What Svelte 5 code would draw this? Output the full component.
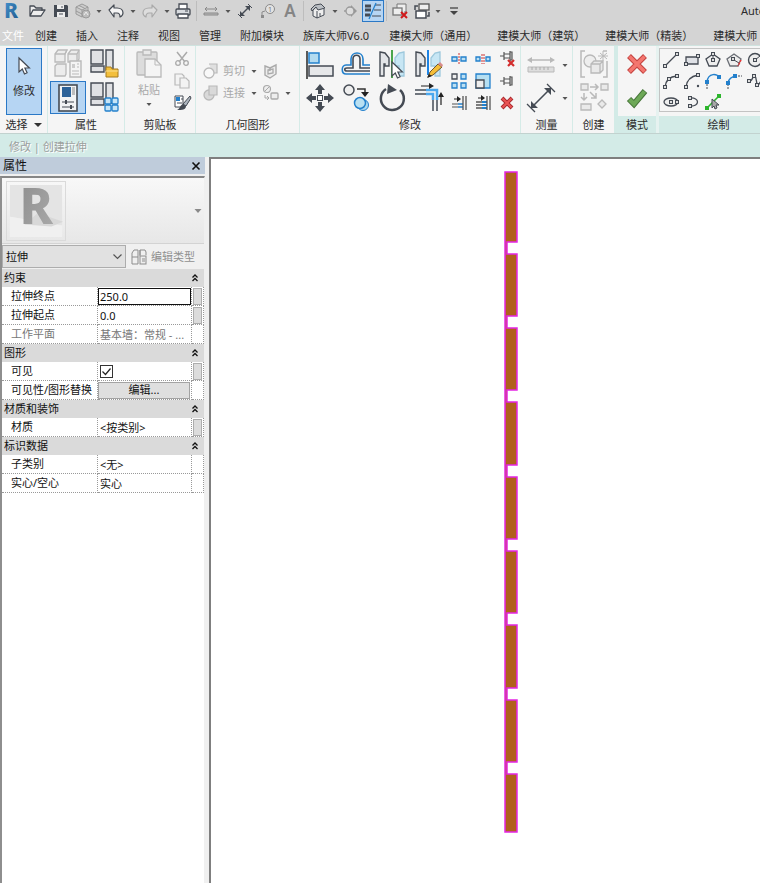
<script lang="ts">
  type Tool = { icon: string; label: string; w?: number; on?: boolean };
  type Prop = {
    id: string;
    name: string;
    value: string;
    kind: 'text' | 'select' | 'check' | 'button';
    muted?: boolean;
    focus?: boolean;
    link?: boolean;
  };
  type Group = { title: string; props: Prop[] };

  const quick: Tool[] = [
    { icon: 'open', label: '打开', w: 26 },
    { icon: 'save', label: '保存', w: 22 },
    { icon: 'sync', label: '同步', w: 22 },
    { icon: 'caret', label: '同步选项', w: 10 },
    { icon: 'undo', label: '放弃', w: 24 },
    { icon: 'caret', label: '放弃列表', w: 10 },
    { icon: 'redo', label: '重做', w: 24 },
    { icon: 'caret', label: '重做列表', w: 10 },
    { icon: 'print', label: '打印', w: 22 },
    { icon: 'sep', label: '' },
    { icon: 'measure', label: '测量', w: 24 },
    { icon: 'caret', label: '测量选项', w: 10 },
    { icon: 'dim', label: '对齐尺寸标注', w: 24 },
    { icon: 'tag', label: '按类别标记', w: 22 },
    { icon: 'text', label: '文字', w: 22 },
    { icon: 'sep', label: '' },
    { icon: 'house', label: '默认三维视图', w: 24 },
    { icon: 'caret', label: '视图选项', w: 10 },
    { icon: 'section', label: '剖面', w: 22 },
    { icon: 'thin', label: '细线', w: 22, on: true },
    { icon: 'sep', label: '' },
    { icon: 'closeWin', label: '关闭隐藏窗口', w: 22 },
    { icon: 'switchWin', label: '切换窗口', w: 22 },
    { icon: 'caret', label: '窗口列表', w: 10 },
    { icon: 'custom', label: '自定义', w: 22 }
  ];

  const tabs = [
    '文件', '创建', '插入', '注释', '视图', '管理', '附加模块', '族库大师V6.0',
    '建模大师（通用）', '建模大师（建筑）', '建模大师（精装）', '建模大师（机电）'
  ];

  const propTools: Tool[] = [
    { icon: 'typeProps', label: '类型属性' },
    { icon: 'family', label: '族类别' },
    { icon: 'palette', label: '属性', on: true },
    { icon: 'familyTypes', label: '族类型' }
  ];
  const clipTools: Tool[] = [
    { icon: 'cut', label: '剪切' },
    { icon: 'copyPage', label: '复制到剪贴板' },
    { icon: 'brush', label: '匹配类型' }
  ];
  const modifyTools: Tool[] = [
    { icon: 'align', label: '对齐' },
    { icon: 'offset', label: '偏移' },
    { icon: 'mirrorPick', label: '镜像 - 拾取轴' },
    { icon: 'mirrorDraw', label: '镜像 - 绘制轴' },
    { icon: 'move', label: '移动' },
    { icon: 'copy', label: '复制' },
    { icon: 'rotate', label: '旋转' },
    { icon: 'trimCorner', label: '修剪/延伸为角' }
  ];
  const modifySmall: Tool[] = [
    { icon: 'split', label: '拆分图元' },
    { icon: 'splitGap', label: '用间隙拆分' },
    { icon: 'unpin', label: '解锁' },
    { icon: 'array', label: '阵列' },
    { icon: 'scale', label: '缩放' },
    { icon: 'pin', label: '锁定' },
    { icon: 'trimOne', label: '修剪/延伸单个图元' },
    { icon: 'trimMany', label: '修剪/延伸多个图元' },
    { icon: 'delete', label: '删除' }
  ];
  const drawTools: Tool[] = [
    { icon: 'line', label: '线' },
    { icon: 'rect', label: '矩形' },
    { icon: 'polyIn', label: '内接多边形' },
    { icon: 'polyOut', label: '外接多边形' },
    { icon: 'circle', label: '圆形' },
    { icon: 'arc3', label: '起点-终点-半径弧' },
    { icon: 'arcCenter', label: '圆心-端点弧' },
    { icon: 'arcTangent', label: '相切-端点弧' },
    { icon: 'fillet', label: '圆角弧' },
    { icon: 'spline', label: '样条曲线' },
    { icon: 'ellipse', label: '椭圆' },
    { icon: 'halfEllipse', label: '半椭圆' },
    { icon: 'pick', label: '拾取线' }
  ];

  const groups: Group[] = [
    {
      title: '约束',
      props: [
        { id: 'end', name: '拉伸终点', value: '250.0', kind: 'text', focus: true, link: true },
        { id: 'start', name: '拉伸起点', value: '0.0', kind: 'text', link: true },
        { id: 'plane', name: '工作平面', value: '基本墙：常规 - ...', kind: 'text', muted: true }
      ]
    },
    {
      title: '图形',
      props: [
        { id: 'visible', name: '可见', value: '', kind: 'check', link: true },
        { id: 'override', name: '可见性/图形替换', value: '编辑...', kind: 'button' }
      ]
    },
    {
      title: '材质和装饰',
      props: [{ id: 'material', name: '材质', value: '<按类别>', kind: 'text', link: true }]
    },
    {
      title: '标识数据',
      props: [
        { id: 'subcat', name: '子类别', value: '<无>', kind: 'select' },
        { id: 'solid', name: '实心/空心', value: '实心', kind: 'select' }
      ]
    }
  ];

  // every drawing is centred on 0,0
  const D = '#454b54';
  const G = '#b9b9b9';
  const B = '#2380cc';
  const cursor = (x: number, y: number) =>
    `<path transform="translate(${x} ${y})" d="M0 0v14l3.3-3 2.2 5 2.6-1.2-2.2-4.8h4.5z" fill="#fff" stroke="${D}" stroke-width="1.2"/>`;
  const dot = (x: number, y: number, c = D) =>
    `<rect x="${x - 1.5}" y="${y - 1.5}" width="3" height="3" fill="${c === D ? '#ddd' : c}" stroke="${c}"/>`;
  const tiles =
    `<g fill="#e0e1e4" stroke="${D}" stroke-width="1.4"><path d="M-13-15h12v14h-12zM2-15h7V5H2zM-13 1h13v6h-13z"/></g>`;

  const icons: Record<string, string> = {
    caret: `<path d="M-2.5-1h5L0 2z" fill="#555"/>`,
    typeCaret: `<path d="M-3.5-2h7L0 2z" fill="#8a8a8a"/>`,
    custom: `<path d="M-4-3h8" stroke="#444" stroke-width="1.3"/><path d="M-4 0h8L0 4z" fill="#444"/>`,
    open: `<path d="M-7 5V-5h4l2 2h6v3M-7 5l3-6H8L4 5z" fill="#eee" stroke="${D}" stroke-width="1.3" stroke-linejoin="round"/>`,
    save: `<path d="M-7-6H6l1 1V6H-7z" fill="${D}"/><path d="M-4-6h7v4h-7zM-4 1h8v5h-8z" fill="#eee"/><path d="M-2 3h4M1-5v2" stroke="${D}"/>`,
    sync: `<path d="M-7-4L-1-7l6 3v7L-1 6l-6-3zM-7-4l6 3 6-3M-1-1v7M-4-5.5l6 3M-7 0l6 3" fill="#ccc" stroke="#999"/><circle cx="3" cy="3" r="4" fill="#bdbdbd" stroke="#999"/><path d="M1 4l2-3 2 3" fill="none" stroke="#eee"/>`,
    undo: `<path d="M-7-1l5-5v3h3c4 0 6 2 6 5 0 2-1 3-3 4 0-3-1-4-3-4h-3v4z" fill="#f4f4f4" stroke="${D}" stroke-width="1.2" stroke-linejoin="round"/>`,
    redo: `<path d="M7-1l-5-5v3h-3c-4 0-6 2-6 5 0 2 1 3 3 4 0-3 1-4 3-4h3v4z" fill="#ddd" stroke="#aaa" stroke-width="1.2" stroke-linejoin="round"/>`,
    print: `<path d="M-4-1v-6h8v6" fill="#fff" stroke="${D}" stroke-width="1.3"/><rect x="-7" y="-2" width="14" height="6" rx="1" fill="#d9dce0" stroke="${D}" stroke-width="1.3"/><path d="M-5 3H5v4H-5z" fill="#fff" stroke="${D}" stroke-width="1.3"/><path d="M2 0h3" stroke="${D}"/>`,
    measure: `<path d="M-6-2H6M-6-2l2-2M-6-2l2 2M6-2L4-4M6-2L4 0" fill="none" stroke="#888"/><path d="M-7 2H7v2H-7z" fill="#bbb" stroke="#888"/>`,
    dim: `<path d="M-4 4l8-8" stroke="${D}" stroke-width="1.4"/><path d="M-5 5v-5l5 5zM5-5v5L0-5z" fill="${D}"/><path d="M-7 3l4 4M3-7l4 4" stroke="${D}"/>`,
    tag: `<circle cx="2" cy="-2" r="4.5" fill="#e2e2e2" stroke="#8b8b8b"/><path d="M-3 0l-3 1v4" fill="none" stroke="#8b8b8b"/><path d="M-7 4h3v3h-3z" fill="#8b8b8b"/><text x="2" y="1" text-anchor="middle" font-size="7" fill="#777">1</text>`,
    text: `<text y="6" text-anchor="middle" font-size="17" font-weight="600" fill="#858585">A</text>`,
    house: `<path d="M-5-1v6l4 2 7-3v-6" fill="#eee" stroke="${D}"/><path d="M-7-2l4-4 6-1 4 4-7 2-2-3-4 4z" fill="#bcc0c5" stroke="${D}"/><path d="M-1 0v7M2 2v3" stroke="${D}"/>`,
    section: `<path d="M-7 0h3" stroke="#999" stroke-width="1.4"/><path d="M0-6l6 6-6 6z" fill="#999"/><circle cx="-1" r="4" fill="#ddd" stroke="#999" stroke-width="1.3"/>`,
    thin: `<path d="M-8-5h6M-8-1h6M-8 4h5" stroke="${D}" stroke-width="3"/><path d="M2-6h6M1-1h7M-1 5h9" stroke="${D}"/><path d="M-4 8L3-8" stroke="${B}" stroke-width="1.3"/>`,
    closeWin: `<path d="M-3-3v-4h9v8H4" fill="#eee" stroke="#777"/><rect x="-7" y="-3" width="9" height="7" fill="#eee" stroke="#777" stroke-width="1.3"/><path d="M1 1l6 6M7 1L1 7" stroke="#d0191b" stroke-width="2"/>`,
    switchWin: `<rect x="-3" y="-7" width="10" height="6" fill="#eee" stroke="#555" stroke-width="1.3"/><rect x="-6" y="0" width="10" height="7" fill="#fff" stroke="${D}" stroke-width="1.5"/><path d="M-7-1v-4h3M7 1v4H5" fill="none" stroke="${D}" stroke-width="1.5"/>`,
    cursor: cursor(-5, -8),
    typeProps: `<g fill="#ececec" stroke="${G}" stroke-width="1.3"><path d="M-13-11l3-4h9l-2 4v8h-10zM0-11l3-4h8v9l-2 3H0zM-13 1l2-2h9v10l-1 2h-10z"/><path d="M-13-11h10l2-4M0-11h9l2-4M9-11v8" fill="none"/></g><path d="M2-4h11v16H2z" fill="#f4f4f4" stroke="${G}" stroke-width="1.4"/><path d="M4-1h3v4H4z" fill="#ccc"/><path d="M9-1h2M9 2h2M4 6h7M4 9h7" stroke="${G}"/>`,
    family: tiles + `<path d="M2 2h5l1 2h6v8H2z" fill="#f3bf3c" stroke="#a67a1c"/><path d="M2 6h12" stroke="#fbe08f"/>`,
    palette: `<rect x="-9" y="-13" width="18" height="26" fill="#f2f3f4" stroke="${D}" stroke-width="1.6"/><path d="M-6-11H3V-1h-9z" fill="#2c6299"/><path d="M4-10h3M4-8h3M4-6h3M4-4h3" stroke="#888"/><path d="M-6 4H6M-6 9H6" stroke="${D}"/><path d="M-2 2v4M3 7v4" stroke="${D}" stroke-width="2"/>`,
    familyTypes: tiles + `<g fill="#c7e5f7" stroke="${B}" stroke-width="1.3"><rect x="1" y="0" width="6" height="6" rx="1"/><rect x="8" y="0" width="6" height="6" rx="1"/><rect x="1" y="7" width="6" height="6" rx="1"/><rect x="8" y="7" width="6" height="6" rx="1"/></g>`,
    paste: `<rect x="-12" y="-12" width="20" height="23" rx="1" fill="#dcdcdc" stroke="${G}" stroke-width="1.3"/><path d="M-6-14h8v5h-8z" fill="#e8e8e8" stroke="${G}" stroke-width="1.3"/><path d="M-4-5H6l6 6v12H-4z" fill="#f4f4f4" stroke="${G}" stroke-width="1.3"/><path d="M6-5v6h6" fill="none" stroke="${G}"/>`,
    cut: `<path d="M-5-7L3 3M5-7L-3 3" stroke="#aaa" stroke-width="1.5"/><circle cx="-4" cy="4" r="2.3" fill="none" stroke="#aaa" stroke-width="1.3"/><circle cx="4" cy="4" r="2.3" fill="none" stroke="#aaa" stroke-width="1.3"/>`,
    copyPage: `<g fill="#f3f3f3" stroke="${G}" stroke-width="1.2"><path d="M-7-7H0l2 2V4h-9z"/><path d="M-2-3h6l3 3v7h-9z"/></g>`,
    brush: `<path d="M-7-7h8V4h-8z" fill="#fff" stroke="${D}"/><path d="M-6-6h4v4h-4z" fill="${B}"/><path d="M-1-4h2M-5 0h5" stroke="${D}"/><path d="M8-7L9-5 4 3 1 1z" fill="#aeb6bf" stroke="${D}"/><path d="M1 1l3 2c0 4-4 4-9 4 3-1 3-5 6-6z" fill="${D}"/>`,
    cutGeom: `<path d="M-2-7h8v9H2" fill="#e0e0e0" stroke="${G}" stroke-width="1.2"/><circle cx="-2" cy="2" r="5" fill="#f8f8f8" stroke="${G}" stroke-width="1.3"/>`,
    joinGeom: `<circle cx="-2" cy="2" r="5" fill="#d9d9d9" stroke="${G}" stroke-width="1.3"/><path d="M-2-7h8v9h-8z" fill="#d9d9d9" stroke="${G}" stroke-width="1.2"/>`,
    cope: `<path d="M-6-5l5 2 6-3v9L-1 7l-5-3z" fill="#ededed" stroke="#aaa" stroke-width="1.4"/><path d="M-3-1l5-1v4l-5 1zM-1-3v3" fill="none" stroke="#aaa" stroke-width="1.3"/>`,
    splitFace: `<circle cx="-4" cy="-4" r="3.5" fill="#eee" stroke="#aaa" stroke-width="1.2"/><path d="M-6-2l4-4" stroke="#aaa"/><rect x="0" y="0" width="7" height="6" rx="1" fill="#eee" stroke="#aaa" stroke-width="1.3"/><path d="M-6 2v3h4M-4 3l2 2-2 2" fill="none" stroke="#aaa"/>`,
    align: `<path d="M-13-14v28" stroke="#333" stroke-width="1.6"/><rect x="-11" y="-12" width="10" height="10" fill="#b3dbf0" stroke="${B}" stroke-width="1.5"/><rect x="-11" y="1" width="24" height="10" fill="#e6e7e9" stroke="${D}" stroke-width="1.5"/>`,
    offset: `<path d="M14 9H-10c-5 0-5-9 0-9h5v-6c0-8 12-8 12 0v6h7" fill="none" stroke="${B}" stroke-width="1.6"/><path d="M14 6H-9c-3 0-3-3 0-3h6v-9c0-5 7-5 7 0v9h10" fill="none" stroke="${D}" stroke-width="1.6"/>`,
    mirrorPick: `<path d="M-12-13l5 1 4 5v8h-4v-2h-1v12h-4z" fill="#e3e5e8" stroke="${D}" stroke-width="1.4"/><path d="M12-13l-5 1-4 5v8h4v10h5z" fill="#c7e6f4" stroke="#9dc8dc" stroke-width="1.3"/><path d="M0-15v28" stroke="#4ca64c" stroke-width="2"/>` + cursor(0, -3),
    mirrorDraw: `<path d="M-12-13l5 1 4 5v8h-4v-2h-1v12h-4z" fill="#e3e5e8" stroke="${D}" stroke-width="1.4"/><path d="M12-13l-5 1-4 5v8h4v10h5z" fill="#c7e6f4" stroke="#9dc8dc" stroke-width="1.3"/><path d="M0-15V10" stroke="#1e83e3" stroke-width="2"/><path d="M0 12l2-5L10-1l4 3L5 10z" fill="#f5be38" stroke="#6d5530"/><path d="M-1 13l2-4 3 2z" fill="#222"/><path d="M10-1l2-2 3 3-1 2z" fill="#d98c8c"/>`,
    move: `<g fill="${D}"><path d="M0-14l5 6H2v4h-4v-4h-3zM0 14l5-6H2V4h-4v4h-3zM-14 0l6-5v3h4v4h-4v3zM14 0L8-5v3H4v4h4v3z"/></g><rect x="-2.5" y="-2.5" width="5" height="5" fill="#fff" stroke="${D}"/>`,
    copy: `<circle cx="-7" cy="-8" r="5" fill="#eee" stroke="${D}" stroke-width="1.5"/><path d="M1-9h8v5" fill="none" stroke="#333" stroke-width="1.5"/><path d="M5-6h8l-4 5z" fill="#222"/><circle cx="7" cy="7" r="5.5" fill="#a7d6ee" stroke="${B}"/><circle cx="4" cy="5" r="5.5" fill="#b9e0f2" stroke="${B}" stroke-width="1.5"/>`,
    rotate: `<path d="M8-8A11.500 11.500 0 1 1-6-9" fill="none" stroke="${D}" stroke-width="2.5"/><path d="M-4-14L5-8l-10 4z" fill="${D}"/>`,
    trimCorner: `<path d="M-13-8H0M-13-4H0M5 13V0M9 13V0" stroke="#70767e" stroke-width="2"/><path d="M-2-8H9V2M-2-4H5V2" fill="none" stroke="#4ba8ee" stroke-width="2.5"/><path d="M-7-12H3M13 7V-2" stroke="#222" stroke-width="1.2"/><path d="M1-15l5 3-5 3zM10-1l3-5 3 5z" fill="#222"/>`,
    split: `<path d="M-7-2h5v4h-5zM2-2h5v4H2z" fill="#bce0f3" stroke="${B}" stroke-width="1.3"/><path d="M0-6V6" stroke="#c33" stroke-dasharray="2 1"/>`,
    splitGap: `<path d="M-7-2h4v4h-4zM3-2h4v4H3z" fill="#bce0f3" stroke="${B}" stroke-width="1.3"/><path d="M-1-5V5M1-5V5" stroke="#c33" stroke-dasharray="2 1"/>`,
    pin: `<path d="M-7 0h4M-3-4v8M-3-2h6M-3 2h6M3-5V5M3-4h2v8H3" fill="#ddd" stroke="#555" stroke-width="1.2"/>`,
    unpin: `<path transform="translate(0 -3)" d="M-7 0h4M-3-4v8M-3-2h6M-3 2h6M3-5V5M3-4h2v8H3" fill="#ddd" stroke="#555" stroke-width="1.2"/><path d="M1 1l6 6M7 1L1 7" stroke="#d32c2c" stroke-width="2.2"/>`,
    array: `<path d="M-7-7h5v5h-5z" fill="#eee" stroke="${D}" stroke-width="1.3"/><path d="M2-7h5v5H2zM-7 2h5v5h-5zM2 2h5v5H2z" fill="#bce0f3" stroke="${B}" stroke-width="1.3"/>`,
    scale: `<path d="M-7-7H7V7H-7z" fill="#b5dff2" stroke="${B}" stroke-width="1.3"/><path d="M-7-1h8v8h-8z" fill="#eee" stroke="${D}" stroke-width="1.3"/>`,
    trimOne: `<path d="M-7 1h6M-7 4h6" stroke="#555" stroke-width="1.2"/><path d="M-1 1h5M-1 4h5" stroke="${B}" stroke-width="1.6"/><path d="M4-7V7M7-7V7" stroke="#555" stroke-width="1.3"/><path d="M-5-4h4" stroke="#222"/><path d="M-2-7l4 3-4 3z" fill="#222"/>`,
    trimMany: `<path d="M-7-1h6M-7 2h6M-7 5h6" stroke="#555" stroke-width="1.5"/><path d="M-1-1h5M-1 2h5M-1 5h5" stroke="${B}" stroke-width="2"/><path d="M4-7V7M7-7V7" stroke="#555" stroke-width="1.3"/><path d="M-5-5h4" stroke="#222"/><path d="M-2-8l4 3-4 3z" fill="#222"/>`,
    delete: `<path d="M-5-5L5 5M5-5L-5 5" stroke="#a8282d" stroke-width="4"/><path d="M-4.500-4.500l9 9M4.500-4.500l-9 9" stroke="#ea5555" stroke-width="2.2"/>`,
    ruler: `<path d="M-12-5h24" stroke="${G}" stroke-width="1.5"/><path d="M-14-5l5-3v6zM14-5L9-8v6z" fill="${G}"/><path d="M-13 2h26v5h-26z" fill="#ddd" stroke="${G}"/><path d="M-9 2v3M-5 2v3M-1 2v3M3 2v3M7 2v3" stroke="#aaa"/>`,
    alignedDim: `<path d="M-8 8L8-8" stroke="${D}" stroke-width="1.6"/><path d="M-10 10v-7l7 7zM10-10v7l-7-7z" fill="${D}"/><path d="M-14 6l8 8M6-14l8 8" stroke="${D}" stroke-width="1.3"/>`,
    group: `<path d="M-9-14h-4v26h4M9-14h4M13-4v16H9" fill="none" stroke="${G}" stroke-width="1.5"/><circle cx="-4" cy="-4" r="6" fill="#eee" stroke="${G}" stroke-width="1.3"/><path d="M-3-1l3-3h9v9L6 8h-9zM-3-1H6v9M6-1l3-3" fill="#e9e9e9" stroke="${G}" stroke-width="1.3"/><path d="M9-14v10M4-9h10M6-12l7 6M13-12l-7 6" stroke="${G}"/>`,
    similar: `<g fill="#eaeaea" stroke="${G}" stroke-width="1.3"><path d="M-13-14h7v6h-7zM7-14h7v6H7zM-13 6h10v6h-10zM8 2l4 4-4 4-4-4z"/><path d="M-4-11h8M1-14l3 3-3 3M-10-5v7M-13-1l3 3 3-3M-4-6l6 6M2-5v5h-5" fill="none" stroke-width="1.5"/></g>`,
    cancel: `<path d="M-8-9L8 7M8-9L-8 7" stroke="#c4423f" stroke-width="5.5"/><path d="M-7.500-8.500l15 15M7.500-8.500l-15 15" stroke="#f4766f" stroke-width="3.5"/>`,
    finish: `<path d="M-8 1l5 5L8-7" fill="none" stroke="#47753a" stroke-width="6"/><path d="M-7.500 1.500L-3 6 7.500-6.500" fill="none" stroke="#6da857" stroke-width="4"/>`,
    line: `<path d="M-6 6L6-6" stroke="${D}" stroke-width="1.3"/>` + dot(-6, 6) + dot(6, -6),
    rect: `<path d="M-6-3H6v7H-6z" fill="#dfe1e6" stroke="${D}" stroke-width="1.3"/>` + dot(-6, 4) + dot(6, -4),
    polyIn: `<path d="M0-6l7 5-3 7h-8l-3-7z" fill="#eee" stroke="${D}" stroke-width="1.3"/><path d="M0-6v6" stroke="${D}"/>` + dot(0, 0) + dot(0, -6),
    polyOut: `<path d="M0-6l7 5-3 7h-8l-3-7z" fill="#eee" stroke="#6b6f76" stroke-width="1.3"/><path d="M0 0l5 3" stroke="${D}"/><path d="M7 0L4 6" stroke="#e33" stroke-width="1.5" stroke-dasharray="2 1"/>` + dot(-1, -1),
    circle: `<circle r="6.5" fill="#eee" stroke="${D}" stroke-width="1.4"/><path d="M0 0l5-4" stroke="${D}"/>` + dot(0, 0),
    arc3: `<path d="M-6 6Q-5-4 6-5" fill="none" stroke="${D}" stroke-width="1.3"/>` + dot(-6, 6) + dot(-2, -2) + dot(6, -5),
    arcCenter: `<path d="M-6 6Q-5-4 6-6" fill="none" stroke="${D}" stroke-width="1.3"/>` + dot(-6, 6) + dot(6, -6) + `<circle cx="6" cy="5" r="1.2" fill="${D}"/>`,
    arcTangent: `<path d="M-6 8V0" stroke="${D}" stroke-dasharray="2 1"/><path d="M-6 1C-5-9 5-7 6-4" fill="none" stroke="${B}" stroke-width="1.4"/>` + dot(-6, 1, B) + dot(6, -4, B),
    fillet: `<path d="M-6 8V1M1-5h7" stroke="${D}" stroke-dasharray="2 1"/><path d="M-6 2Q-5-4 2-5" fill="none" stroke="${B}" stroke-width="1.4"/>` + dot(-6, 2, B) + dot(1, -5, B),
    spline: `<path d="M-6 0C-3 2-2-7 0-5s1 12 4 8l4-6" fill="none" stroke="${D}" stroke-width="1.3"/>` + dot(-6, 0) + dot(-1, -5) + dot(2, 4),
    ellipse: `<ellipse rx="7" ry="4" fill="#eee" stroke="${D}" stroke-width="1.3"/>` + dot(0, 0) + dot(6, 0),
    halfEllipse: `<path d="M-2-4c10-1 10 9 0 8" fill="none" stroke="${D}" stroke-width="1.3"/>` + dot(-2, -4) + dot(-2, 4),
    pick: `<path d="M-6 6L6-6" stroke="#2cb52c" stroke-width="1.6"/>` + dot(-6, 6, '#2cb52c') + dot(6, -6, '#2cb52c') + `<path transform="translate(-1 -3)" d="M0 0v9l2-2 1 3 2-1-1-3h3z" fill="#aaa" stroke="${D}"/>`,
    editType: `<path d="M-7-4l2-3h4v14h-6zM-7 0h6M1-2v-5h5l1 2v3M1-7v6" fill="none" stroke="#8d8d8d"/><rect x="1" y="-1" width="6" height="8" fill="#eee" stroke="#8d8d8d"/><path d="M3 2h3M3 4h3" stroke="#8d8d8d"/>`,
    collapse: `<path d="M-2.5-.5L0-3 2.5-.5M-2.5 3L0 .5 2.5 3" fill="none" stroke="#111" stroke-width="1.3"/>`,
    close: `<path d="M-3.5-3.5l7 7M3.5-3.5l-7 7" stroke="#111" stroke-width="1.6"/>`
  };

  // notched profile: each notch leaves a thin spine on the left
  const notches = [70, 144, 218, 293, 367, 441, 516, 590];
  const outline =
    'M1 1H13' + notches.map((y) => `V${y + 1}H3V${y + 13}H13`).join('') + 'V661H1Z';
</script>

{#snippet icon(name: string, size: number)}
  <svg class="icon" width={size} height={size} viewBox="{-size / 2} {-size / 2} {size} {size}" aria-hidden="true">
    {@html icons[name]}
  </svg>
{/snippet}

{#snippet toolset(tools: Tool[], size: number)}
  {#each tools as tool}
    <button class="tool" class:on={tool.on} aria-label={tool.label}>{@render icon(tool.icon, size)}</button>
  {/each}
{/snippet}

<div class="app">
  <header class="quick">
    <svg class="logo" viewBox="0 0 24 22" aria-hidden="true">
      <defs>
        <linearGradient id="blue" x2="1" y2="1">
          <stop offset="0" stop-color="#4a9ad6" />
          <stop offset="1" stop-color="#1c5487" />
        </linearGradient>
      </defs>
      <text x="4" y="18" font-size="21" font-weight="800" fill="url(#blue)">R</text>
    </svg>
    {#each quick as tool}
      {#if tool.icon === 'sep'}
        <span class="sep"></span>
      {:else}
        <button class="tool" class:on={tool.on} style="width: {tool.w}px" aria-label={tool.label}>
          {@render icon(tool.icon, tool.icon === 'caret' ? 8 : 18)}
        </button>
      {/if}
    {/each}
    <span class="title">Autodesk Revit</span>
  </header>

  <nav class="tabs">
    {#each tabs as tab, i}
      <button class="tab" class:file={i === 0} class:plugin={i > 7}>{tab}</button>
    {/each}
  </nav>

  <div class="ribbon">
    <section class="panel select">
      <div class="body">
        <button class="big on">{@render icon('cursor', 24)}<span>修改</span></button>
      </div>
      <h2>选择 <span class="drop"></span></h2>
    </section>

    <section class="panel props">
      <div class="body grid2">{@render toolset(propTools, 32)}</div>
      <h2>属性</h2>
    </section>

    <section class="panel clip">
      <div class="body">
        <button class="big" disabled>
          {@render icon('paste', 32)}<span>粘贴</span>{@render icon('caret', 8)}
        </button>
        <div class="stack">{@render toolset(clipTools, 18)}</div>
      </div>
      <h2>剪贴板</h2>
    </section>

    <section class="panel geom">
      <div class="body rows">
        <div class="row">
          <button class="wide" disabled>{@render icon('cutGeom', 18)}<span>剪切</span>{@render icon('caret', 8)}</button>
          <button class="tool" aria-label="连接端切割">{@render icon('cope', 18)}</button>
        </div>
        <div class="row">
          <button class="wide" disabled>{@render icon('joinGeom', 18)}<span>连接</span>{@render icon('caret', 8)}</button>
          <button class="tool" aria-label="拆分面">{@render icon('splitFace', 18)}</button>
          <button class="tool" aria-label="更多">{@render icon('caret', 8)}</button>
        </div>
      </div>
      <h2>几何图形</h2>
    </section>

    <section class="panel modify">
      <div class="body">
        <div class="grid4">{@render toolset(modifyTools, 32)}</div>
        <div class="grid3">{@render toolset(modifySmall, 18)}</div>
      </div>
      <h2>修改</h2>
    </section>

    <section class="panel measure">
      <div class="body pairs">
        <button class="tool" aria-label="测量">{@render icon('ruler', 32)}</button>
        <button class="tool" aria-label="测量选项">{@render icon('caret', 8)}</button>
        <button class="tool" aria-label="对齐尺寸标注">{@render icon('alignedDim', 32)}</button>
        <button class="tool" aria-label="尺寸标注选项">{@render icon('caret', 8)}</button>
      </div>
      <h2>测量</h2>
    </section>

    <section class="panel create">
      <div class="body single">
        <button class="tool" aria-label="创建组">{@render icon('group', 32)}</button>
        <button class="tool" aria-label="创建类似">{@render icon('similar', 32)}</button>
      </div>
      <h2>创建</h2>
    </section>

    <section class="panel mode">
      <div class="body single">
        <button class="tool" aria-label="取消编辑">{@render icon('cancel', 32)}</button>
        <button class="tool" aria-label="完成编辑">{@render icon('finish', 32)}</button>
      </div>
      <h2>模式</h2>
    </section>

    <section class="panel draw">
      <div class="body">
        <div class="gallery">{@render toolset(drawTools, 18)}</div>
      </div>
      <h2>绘制</h2>
    </section>
  </div>

  <div class="options">修改 | 创建拉伸</div>

  <main>
    <aside>
      <div class="head">
        <span>属性</span>
        <button class="tool" aria-label="关闭">{@render icon('close', 12)}</button>
      </div>
      <div class="palette">
        <button class="type" aria-label="类型选择器">
          <svg class="thumb" viewBox="0 0 60 60" aria-hidden="true">
            <defs>
              <linearGradient id="grey" x2="1" y2="1">
                <stop offset="0" stop-color="#8c8c8c" />
                <stop offset="1" stop-color="#ababab" />
              </linearGradient>
            </defs>
            <path d="M3 3h54v42L3 36z" fill="#e4e4e4" />
            <path d="M3 36l54 9v12H3z" fill="#f0f0f0" />
            <path d="M18 44l14-12 26 9-12 5z" fill="#d8d8d8" />
            <text x="13" y="43" font-size="52" font-weight="800" fill="url(#grey)">R</text>
          </svg>
          {@render icon('typeCaret', 10)}
        </button>
        <div class="filter">
          <select aria-label="图元">
            <option>拉伸</option>
          </select>
          <button class="edit" disabled>{@render icon('editType', 18)}<span>编辑类型</span></button>
        </div>
        <table>
          <colgroup><col class="name" /><col /><col class="link" /></colgroup>
          {#each groups as group}
            <tbody>
              <tr class="group">
                <th colspan="3">
                  <button>{group.title}{@render icon('collapse', 10)}</button>
                </th>
              </tr>
              {#each group.props as prop}
                <tr class:muted={prop.muted}>
                  <td class="key"><label for={prop.id}>{prop.name}</label></td>
                  <td>
                    {#if prop.kind === 'check'}
                      <input id={prop.id} type="checkbox" checked />
                    {:else if prop.kind === 'button'}
                      <button id={prop.id} class="push">{prop.value}</button>
                    {:else if prop.kind === 'select'}
                      <select id={prop.id}><option>{prop.value}</option></select>
                    {:else}
                      <input id={prop.id} class:focus={prop.focus} type="text" value={prop.value} readonly={prop.muted} />
                    {/if}
                  </td>
                  <td>
                    {#if prop.link}<button class="assoc" aria-label="关联族参数"></button>{/if}
                  </td>
                </tr>
              {/each}
            </tbody>
          {/each}
        </table>
      </div>
    </aside>

    <div class="canvas">
      <svg class="profile" width="14" height="663" viewBox="0 0 14 663" role="img" aria-label="拉伸轮廓">
        <path d={outline} fill="#b0601c" stroke="#e326e3" stroke-width="1.5" />
      </svg>
    </div>
  </main>
</div>

<style>
  :global(body) {
    overflow: hidden;
    background: #fff;
  }
  .app {
    display: flex;
    flex-direction: column;
    min-height: 100vh;
    overflow: hidden;
    background: #d4d4d4;
    color: #2b2b2b;
    font: 11px/16px "Noto Sans", "Noto Sans CJK SC", sans-serif;
  }
  button, input, select {
    margin: 0;
    padding: 0;
    border: 0;
    background: none;
    color: inherit;
    font: inherit;
  }
  .icon {
    display: block;
    flex: none;
    overflow: visible;
  }
  .tool {
    display: flex;
    align-items: center;
    justify-content: center;
    box-sizing: border-box;
  }
  .on {
    border: 1px solid #2a78c6;
    background: #b6d5f3;
  }

  .quick {
    display: flex;
    align-items: center;
    height: 22px;
    white-space: nowrap;
  }
  .quick .tool {
    flex: none;
    height: 22px;
  }
  .logo {
    flex: none;
    width: 24px;
    height: 22px;
    overflow: visible;
  }
  .sep {
    flex: none;
    width: 1px;
    height: 20px;
    margin: 0 2px;
    background: #bdbdbd;
  }
  .title {
    flex: none;
    width: 19px;
    margin-left: auto;
  }

  .tabs {
    display: flex;
    gap: 19px;
    height: 23px;
    padding: 0 2px;
    border-bottom: 1px solid #cfe3df;
  }
  .tab {
    flex: none;
    padding-top: 4px;
    white-space: nowrap;
  }
  .file {
    margin-right: -8px;
    color: #fff;
  }
  .plugin {
    margin-left: 1px;
  }

  .ribbon {
    display: flex;
    height: 87px;
    background: #f5f5f5;
  }
  .panel {
    display: flex;
    flex: none;
    flex-direction: column;
    box-sizing: border-box;
    border-right: 1px solid #d5ebe7;
  }
  .body {
    display: flex;
    flex: 1;
    padding-top: 2px;
  }
  h2 {
    display: flex;
    align-items: center;
    justify-content: center;
    gap: 6px;
    height: 17px;
    margin: 0;
    font-size: 11px;
    font-weight: 400;
  }
  .drop {
    border: 4px solid transparent;
    border-top-color: #333;
    border-bottom: 0;
  }
  .big {
    display: flex;
    flex-direction: column;
    align-items: center;
    box-sizing: border-box;
    width: 36px;
    height: 67px;
  }
  .big:disabled, .wide:disabled {
    color: #a9a9a9;
  }
  .select {
    width: 48px;
  }
  .select .body {
    padding-left: 6px;
  }
  .select .big {
    gap: 5px;
    padding-top: 5px;
  }
  .props {
    width: 77px;
  }
  .grid2 {
    display: grid;
    grid-template: 33px 33px / 36px 36px;
    padding-left: 2px;
  }
  .clip {
    width: 71px;
  }
  .clip .body {
    gap: 6px;
    padding-left: 6px;
  }
  .clip .big span {
    margin: 2px 0;
  }
  .stack {
    display: grid;
    grid-template: repeat(3, 22px) / 18px;
  }
  .geom {
    width: 104px;
  }
  .rows {
    flex-direction: column;
    gap: 4px;
    padding: 16px 0 0 6px;
  }
  .row {
    display: flex;
    align-items: center;
    gap: 4px;
    height: 18px;
  }
  .wide {
    display: flex;
    align-items: center;
    gap: 3px;
    width: 56px;
  }
  .wide .icon:last-child {
    margin-left: auto;
  }
  .modify {
    width: 221px;
  }
  .modify .body {
    gap: 1px;
    padding-left: 2px;
  }
  .grid4 {
    display: grid;
    grid-template: 33px 33px / repeat(4, 36px);
  }
  .grid3 {
    display: grid;
    grid-template: repeat(3, 22px) / repeat(3, 24px);
  }
  .measure {
    width: 52px;
  }
  .pairs {
    display: grid;
    grid-template: 33px 33px / 38px 10px;
    padding-left: 1px;
  }
  .create {
    width: 45px;
    border-right: 4px solid #d3ebe7;
  }
  .single {
    display: grid;
    grid-template-rows: 33px 33px;
  }
  .mode {
    width: 41px;
    border-right: 3px solid #e6f2f0;
  }
  .mode h2, .draw h2 {
    background: #d3ebe7;
  }
  .draw {
    width: 120px;
  }
  .gallery {
    display: grid;
    grid-template: repeat(3, 21px) / repeat(5, 21px);
    width: 118px;
    height: 62px;
    border: 1px solid #c3c3c3;
  }

  .options {
    height: 24px;
    padding: 0 9px;
    border-top: 1px solid #c2d2cf;
    box-sizing: border-box;
    background: #d3ebe7;
    color: #9b9f9e;
    line-height: 26px;
    text-shadow: 1px 1px #fff;
  }

  main {
    display: flex;
    flex: 1;
    background: #f0f0f0;
  }
  aside {
    display: flex;
    flex: none;
    flex-direction: column;
    width: 205px;
    margin-right: 4px;
    color: #111;
  }
  .head {
    display: flex;
    align-items: center;
    justify-content: space-between;
    height: 17px;
    margin-bottom: 2px;
    padding: 0 3px;
    background: #bfccdb;
    font-size: 12px;
  }
  .palette {
    flex: 1;
    border-top: 2px solid #868686;
    border-left: 2px solid #8e8e8e;
    border-right: 1px solid #f0f0f0;
    background: #fff;
  }
  .type {
    display: flex;
    align-items: center;
    justify-content: space-between;
    box-sizing: border-box;
    width: 100%;
    height: 66px;
    padding: 0 1px 0 4px;
    border-bottom: 1px solid #d3d3d3;
    background: linear-gradient(#f8f8f8, #e7e7e7);
  }
  .thumb {
    width: 60px;
    height: 60px;
    border: 1px solid #dadada;
    box-sizing: border-box;
    overflow: visible;
  }
  .filter {
    display: flex;
    align-items: center;
    gap: 4px;
    height: 25px;
    background: #f0f0f0;
  }
  .filter select {
    appearance: none;
    width: 124px;
    height: 23px;
    padding-left: 3px;
    border: 1px solid #adadad;
    background: #e1e1e1 url("data:image/svg+xml,%3Csvg xmlns='http://www.w3.org/2000/svg' width='9' height='6'%3E%3Cpath d='M.5.5l4 4 4-4' fill='none' stroke='%23555' stroke-width='1.2'/%3E%3C/svg%3E") no-repeat right 3px center;
  }
  .edit {
    display: flex;
    align-items: center;
    gap: 3px;
    color: #8f8f8f;
    white-space: nowrap;
  }

  table {
    width: 100%;
    border-collapse: separate;
    border-spacing: 0;
    table-layout: fixed;
  }
  .name {
    width: 96px;
  }
  .link {
    width: 12px;
  }
  .group {
    background: #dadada;
  }
  th, td {
    height: 18px;
    padding: 0;
    white-space: nowrap;
  }
  th button {
    display: flex;
    align-items: center;
    justify-content: space-between;
    width: 100%;
    padding: 0 4px 0 2px;
    font-weight: 400;
  }
  td {
    border-right: 1px dotted #999;
    border-bottom: 1px dotted #999;
  }
  .key {
    padding-left: 9px;
  }
  td input, td select {
    display: block;
    box-sizing: border-box;
    width: 100%;
    height: 17px;
    padding: 0 1px;
    border: 1px solid transparent;
    outline: 0;
    appearance: none;
    line-height: 15px;
  }
  td .focus {
    border-color: #111;
  }
  .muted {
    color: #777;
  }
  td input[type="checkbox"] {
    width: 13px;
    height: 13px;
    margin-left: 2px;
    border-color: #333;
    background: #fff url("data:image/svg+xml,%3Csvg xmlns='http://www.w3.org/2000/svg' width='11' height='11'%3E%3Cpath d='M1.500 5.500l3 3 5-6' fill='none' stroke='%23222' stroke-width='1.2'/%3E%3C/svg%3E") no-repeat center;
  }
  .push {
    display: block;
    box-sizing: border-box;
    width: 92px;
    height: 17px;
    border: 1px solid #a3a3a3;
    background: #dfdfdf;
    line-height: 14px;
  }
  .assoc {
    display: block;
    box-sizing: border-box;
    width: 9px;
    height: 17px;
    margin-left: 1px;
    border: 1px solid #adadad;
    background: #dcdcdc;
  }

  .canvas {
    position: relative;
    flex: 1;
    border-top: 2px solid #7f7f7f;
    border-left: 2px solid #7f7f7f;
    background: #fff;
  }
  .profile {
    position: absolute;
    top: 12px;
    left: 293px;
  }
</style>
